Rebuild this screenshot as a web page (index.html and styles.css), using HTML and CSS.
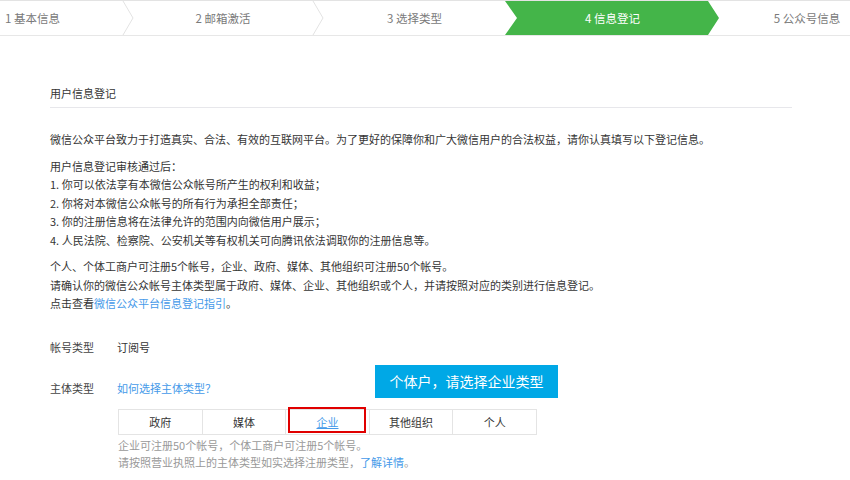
FILE: index.html
```html
<!DOCTYPE html>
<html lang="zh-CN">
<head>
<meta charset="utf-8">
<title>信息登记</title>
<link rel="stylesheet" href="styles.css">
</head>
<body>
<div class="steps">
  <div class="step step-first">1 基本信息</div>
  <svg class="sep" width="12" height="34" viewBox="0 0 12 34"><polyline points="1,0 11,17 1,34" fill="none" stroke="#e3e3e3" stroke-width="1"/></svg>
  <div class="step step-2">2 邮箱激活</div>
  <svg class="sep" width="12" height="34" viewBox="0 0 12 34"><polyline points="1,0 11,17 1,34" fill="none" stroke="#e3e3e3" stroke-width="1"/></svg>
  <div class="step step-3">3 选择类型</div>
  <div class="step step-current">4 信息登记</div>
  <div class="step step-5">5 公众号信息</div>
</div>

<div class="main">
  <div class="title">用户信息登记</div>
  <p class="para p1">微信公众平台致力于打造真实、合法、有效的互联网平台。为了更好的保障你和广大微信用户的合法权益，请你认真填写以下登记信息。</p>
  <p class="para">用户信息登记审核通过后：<br>1. 你可以依法享有本微信公众帐号所产生的权利和收益；<br>2. 你将对本微信公众帐号的所有行为承担全部责任；<br>3. 你的注册信息将在法律允许的范围内向微信用户展示；<br>4. 人民法院、检察院、公安机关等有权机关可向腾讯依法调取你的注册信息等。</p>
  <p class="para">个人、个体工商户可注册5个帐号，企业、政府、媒体、其他组织可注册50个帐号。<br>请确认你的微信公众帐号主体类型属于政府、媒体、企业、其他组织或个人，并请按照对应的类别进行信息登记。<br>点击查看<a class="link">微信公众平台信息登记指引</a>。</p>

  <div class="row row-account">
    <span class="label">帐号类型</span>
    <span class="value">订阅号</span>
  </div>
  <div class="row row-subject">
    <span class="label">主体类型</span>
    <a class="link">如何选择主体类型？</a>
  </div>
  <div class="tip">个体户，请选择企业类型</div>

  <div class="field">
    <div class="types">
      <div class="seg">政府</div>
      <div class="seg">媒体</div>
      <div class="seg seg-active"><a class="link under">企业</a><span class="mark"></span></div>
      <div class="seg">其他组织</div>
      <div class="seg">个人</div>
    </div>
    <div class="hint hint-first">企业可注册50个帐号，个体工商户可注册5个帐号。</div>
    <div class="hint">请按照营业执照上的主体类型如实选择注册类型，<a class="link">了解详情</a>。</div>
  </div>
</div>
</body>
</html>
```

FILE: styles.css
```css
html, body {
  margin: 0;
  padding: 0;
  background: #fff;
}
body {
  width: 850px;
  height: 480px;
  overflow: hidden;
  position: relative;
  font-family: "Noto Sans CJK SC", "Noto Sans", sans-serif;
  font-size: 11px;
  color: #353535;
}
.steps {
  display: flex;
  height: 34px;
  border-top: 1px solid #e3e3e3;
  border-bottom: 1px solid #e7e7e7;
  overflow: hidden;
  width: 850px;
}
.step {
  flex: none;
  height: 34px;
  line-height: 34px;
  color: #7a7a7a;
  font-size: 11.5px;
  text-align: center;
  white-space: nowrap;
}
.sep {
  flex: none;
  display: block;
}
.step-first {
  width: 117px;
  padding-left: 5px;
  text-align: left;
}
.step-2 { width: 178px; }
.step-3 { width: 181px; }
.step-current {
  width: 191px;
  padding: 0 11px 0 12px;
  background: #44b549;
  color: #fff;
  clip-path: polygon(0 0, 203px 0, 100% 50%, 203px 100%, 0 100%, 12px 50%);
}
.step-5 { width: 176px; }

.main {
  width: 742px;
  margin-left: 50px;
}
.title {
  margin-top: 48px;
  line-height: 18px;
  padding-bottom: 5px;
  border-bottom: 1px solid #e7e7eb;
  color: #353535;
}
.para {
  margin: 8px 0 0;
  line-height: 18.5px;
}
.p1 { margin-top: 22px; }
.link {
  color: #459ae9;
  text-decoration: none;
}
.under { text-decoration: underline; }
.row {
  display: flex;
  line-height: 18px;
}
.row-account { margin-top: 25px; }
.row-subject { margin-top: 23px; }
.label {
  width: 67px;
  color: #444;
}
.value { color: #353535; }
.tip {
  position: absolute;
  left: 375px;
  top: 365px;
  width: 183px;
  height: 33px;
  background: #00a8e6;
  color: #fff;
  font-size: 14px;
  line-height: 33px;
  text-align: center;
}
.field {
  margin: 12px 0 0 68px;
}
.types {
  display: flex;
}
.seg {
  position: relative;
  box-sizing: border-box;
  width: 84.6px;
  height: 26px;
  line-height: 24px;
  border: 1px solid #e4e4e4;
  margin-left: -1px;
  text-align: center;
  color: #353535;
}
.seg:first-child { margin-left: 0; }
.mark {
  position: absolute;
  left: 2px;
  top: -2.5px;
  width: 78px;
  height: 26px;
  box-sizing: border-box;
  border: 2px solid #e00000;
}
.hint {
  color: #999;
  line-height: 17px;
}
.hint-first { margin-top: 2px; }
```
